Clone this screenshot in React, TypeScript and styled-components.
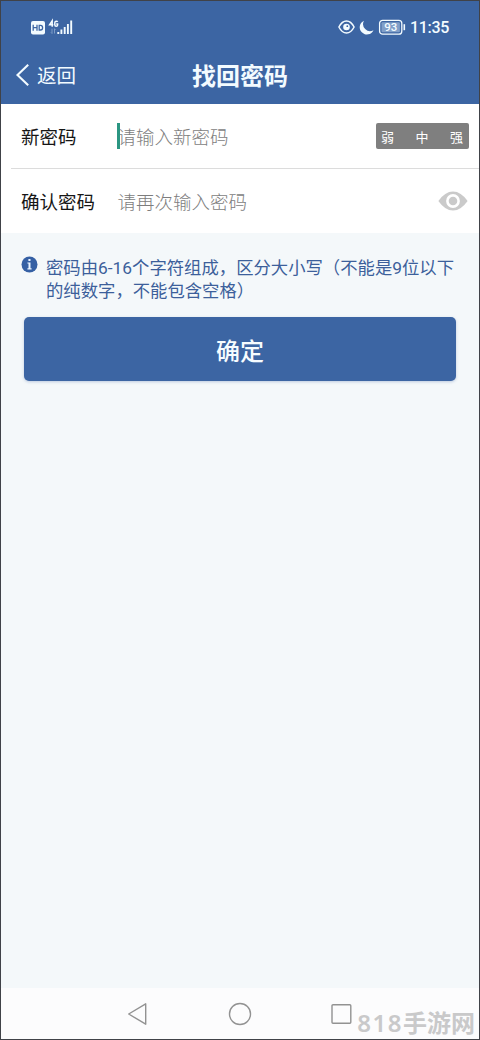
import React from 'react';
import styled, { createGlobalStyle } from 'styled-components';

const GlobalStyle = createGlobalStyle`
  * { box-sizing: border-box; }
  body { margin: 0; font-family: Roboto, 'Noto Sans CJK SC', sans-serif; }
`;

const Screen = styled.div`
  display: flex;
  flex-direction: column;
  width: 480px;
  height: 1040px;
  border: 1px solid #404248;
  background: #f4f8fa;
  overflow: hidden;
`;

const Header = styled.header`
  height: 103px;
  flex: none;
  background: #3c65a3;
  color: #f3fbff;
`;

const StatusBar = styled.div`
  display: flex;
  justify-content: space-between;
  align-items: center;
  height: 52px;
  padding: 0 30px 0 29px;
`;

const StatusGroup = styled.div`
  display: flex;
  align-items: center;
  gap: 4px;
`;

const Clock = styled.span`
  padding-top: 2px;
  font-size: 16px;
  letter-spacing: -0.3px;
  font-weight: 500;
  line-height: 18px;
`;

const TitleBar = styled.div`
  display: grid;
  grid-template-columns: 1fr auto 1fr;
  align-items: center;
  height: 46px;
`;

const Back = styled.button`
  display: flex;
  align-items: center;
  gap: 7px;
  padding: 0 0 0 14px;
  border: 0;
  background: none;
  color: inherit;
  font: 400 19.5px/28px Roboto, 'Noto Sans CJK SC', sans-serif;

  svg { margin-top: -2px; }
  span { padding-top: 1px; }
`;

const Title = styled.h1`
  margin: 0;
  padding-top: 2px;
  font-size: 24px;
  line-height: 34px;
  font-weight: 700;
`;

const Form = styled.div`
  flex: none;
  height: 129px;
  padding-left: 10px;
  background: #fff;
`;

const Field = styled.div<{ $divided?: boolean; $height: number; $right: number }>`
  display: flex;
  align-items: center;
  height: ${(p) => p.$height}px;
  padding: 0 ${(p) => p.$right}px 0 10px;
  border-bottom: ${(p) => (p.$divided ? '1px solid #dcdcdc' : '0')};
`;

const Label = styled.label`
  width: 96px;
  flex: none;
  padding-top: 3px;
  color: #161616;
  font-size: 18.5px;
  line-height: 26px;
`;

const Entry = styled.div<{ $focused?: boolean }>`
  position: relative;
  flex: 1;
  padding: 3px 0 0 0.5px;
  color: #7d7d7d;
  font-size: 18.5px;
  font-weight: 300;
  line-height: 26px;
  ${(p) =>
    p.$focused &&
    `&::before {
      content: '';
      position: absolute;
      left: 0;
      top: 1px;
      width: 3px;
      height: 26px;
      background: #2b9682;
    }`}
`;

const Strength = styled.div`
  display: flex;
  justify-content: space-between;
  align-items: center;
  width: 93px;
  height: 26px;
  margin-top: -1px;
  padding: 1px 6px 0 5px;
  border-radius: 2px;
  background: #7f7f7f;
  color: #fff;
  font-size: 13px;
`;

const Hint = styled.div`
  display: flex;
  align-items: flex-start;
  gap: 8px;
  height: 84px;
  flex: none;
  padding: 23px 0 0 20px;
  color: #3c5f9b;

  svg { flex: none; }
`;

const HintText = styled.p`
  margin: 0;
  padding-top: 0.5px;
  font-size: 17.35px;
  line-height: 23.4px;
  white-space: nowrap;
`;

const Submit = styled.button`
  flex: none;
  height: 64px;
  margin: 0 23px;
  padding: 6px 0 0;
  border: 0;
  border-radius: 5px;
  background: #3c65a3;
  box-shadow: 0 1px 3px rgba(60, 101, 163, 0.3);
  color: #f7fcff;
  font: 500 24px/34px Roboto, 'Noto Sans CJK SC', sans-serif;
`;

const NavBar = styled.nav`
  position: relative;
  display: flex;
  align-items: center;
  gap: 79px;
  height: 51px;
  flex: none;
  margin-top: auto;
  padding-left: 126px;
  background: #fcfcfd;
`;

const Watermark = styled.span`
  position: absolute;
  right: 4px;
  top: 17px;
  color: #c9c9ca;
  font: 700 24px/34px 'Noto Sans CJK SC', sans-serif;
  white-space: nowrap;
`;

const WatermarkDigits = styled.span`
  font-family: 'Noto Sans', sans-serif;
  font-weight: 600;
  letter-spacing: 1.5px;
`;

const NetworkIcons = () => (
  <svg width="44" height="18" viewBox="0 0 44 18">
    <rect x="1" y="3" width="14" height="13.5" rx="2" fill="#f3fbff" />
    <path d="M3.2 6.7v6M7 6.7v6M3.2 9.7H7M9.2 7.4v4.6h1.4q2 0 2-2.3t-2-2.3z" fill="none" stroke="#3c65a3" strokeWidth="1.3" />
    <path d="M22.2 8.8V2.8L19.6 6.8h3.7M27.6 3.9c-.4-1-2.8-1.2-2.8.9v2c0 2 2.8 1.8 2.8.2V6h-1.4" fill="none" stroke="#f3fbff" strokeWidth="1.5" />
    <path d="M22 10.7v4.8l-1-1M24.5 15.5v-4.8l1 1" fill="none" stroke="#8eabd0" strokeWidth=".8" />
    <path d="M28.3 14v2M31.4 11.5V16M34.7 9v7M37.9 6v10M41.2 2.5V16" stroke="#f3fbff" strokeWidth="1.9" />
  </svg>
);

const EyeOutline = () => (
  <svg width="17" height="14" viewBox="0 0 17 14" fill="none" stroke="#f3fbff" strokeWidth="1.5">
    <path d="M.9 7Q4 1 8.5 1T16.1 7Q13 13 8.5 13T.9 7Z" />
    <circle cx="8.5" cy="7" r="3.3" fill="#f3fbff" stroke="none" />
    <circle cx="9.3" cy="6.2" r=".9" fill="#3c65a3" stroke="none" />
  </svg>
);

const Moon = () => (
  <svg width="15" height="15" viewBox="0 0 15 15">
    <path d="M5 .7A7.2 7.2 0 1 0 14.5 10.2A7 7 0 0 1 5 .7Z" fill="#f3fbff" />
  </svg>
);

const Battery = () => (
  <svg width="28" height="16" viewBox="0 0 28 16">
    <rect x="1.6" y="1.3" width="22.2" height="13.9" rx="3" fill="none" stroke="#f3fbff" strokeWidth="1.3" />
    <rect x="3.5" y="3.2" width="18.4" height="10.1" rx="1" fill="#819fc8" />
    <path d="M26.3 5.2v6" stroke="#f3fbff" strokeWidth="1.6" />
    <text x="12.7" y="12.4" textAnchor="middle" fill="#f3fbff" fontSize="11.5" fontWeight="500" fontFamily="Roboto, sans-serif">93</text>
  </svg>
);

const Chevron = () => (
  <svg width="15" height="24" viewBox="0 0 15 24" fill="none" stroke="#f3fbff" strokeWidth="2.1">
    <path d="M13.2 1.8L2.5 12l10.7 10.2" />
  </svg>
);

const EyeSolid = () => (
  <svg width="30" height="20" viewBox="0 0 30 20">
    <path d="M.4 10Q7 .5 15 .5T29.6 10Q23 19.5 15 19.5T.4 10Z" fill="#cacaca" />
    <circle cx="15" cy="10" r="5.6" fill="#cacaca" stroke="#fff" strokeWidth="2.6" />
  </svg>
);

const Info = () => (
  <svg width="17" height="17" viewBox="0 0 17 17">
    <circle cx="8.5" cy="8.5" r="8" fill="#3560a4" />
    <path d="M7.4 3h2.1v2H7.4zM6.4 6.5h3.1v5.8h1.1v1.1H6.4v-1.1h1.1V7.6H6.4z" fill="#eaf4ff" />
  </svg>
);

export default function App() {
  return (
    <>
      <GlobalStyle />
      <Screen>
        <Header>
          <StatusBar>
            <NetworkIcons />
            <StatusGroup>
              <EyeOutline />
              <Moon />
              <Battery />
              <Clock>11:35</Clock>
            </StatusGroup>
          </StatusBar>
          <TitleBar>
            <Back><Chevron /><span>返回</span></Back>
            <Title>找回密码</Title>
          </TitleBar>
        </Header>
        <Form>
          <Field $height={65} $right={10} $divided>
            <Label>新密码</Label>
            <Entry $focused>请输入新密码</Entry>
            <Strength><span>弱</span><span>中</span><span>强</span></Strength>
          </Field>
          <Field $height={64} $right={11}>
            <Label>确认密码</Label>
            <Entry>请再次输入密码</Entry>
            <EyeSolid />
          </Field>
        </Form>
        <Hint>
          <Info />
          <HintText>
            密码由6-16个字符组成，区分大小写（不能是9位以下<br />
            的纯数字，不能包含空格）
          </HintText>
        </Hint>
        <Submit>确定</Submit>
        <NavBar>
          <svg width="22" height="24" viewBox="0 0 22 24" fill="none" stroke="#929292" strokeWidth="1.4" strokeLinejoin="round">
            <path d="M18.7 1.8v20.4L1.7 12z" />
          </svg>
          <svg width="24" height="24" viewBox="0 0 24 24" fill="none" stroke="#929292" strokeWidth="1.4">
            <circle cx="12" cy="12" r="10.5" />
          </svg>
          <svg width="22" height="22" viewBox="0 0 22 22" fill="none" stroke="#929292" strokeWidth="1.4">
            <rect x="1" y="1.7" width="18.8" height="18.6" rx="1" />
          </svg>
          <Watermark><WatermarkDigits>818</WatermarkDigits>手游网</Watermark>
        </NavBar>
      </Screen>
    </>
  );
}
